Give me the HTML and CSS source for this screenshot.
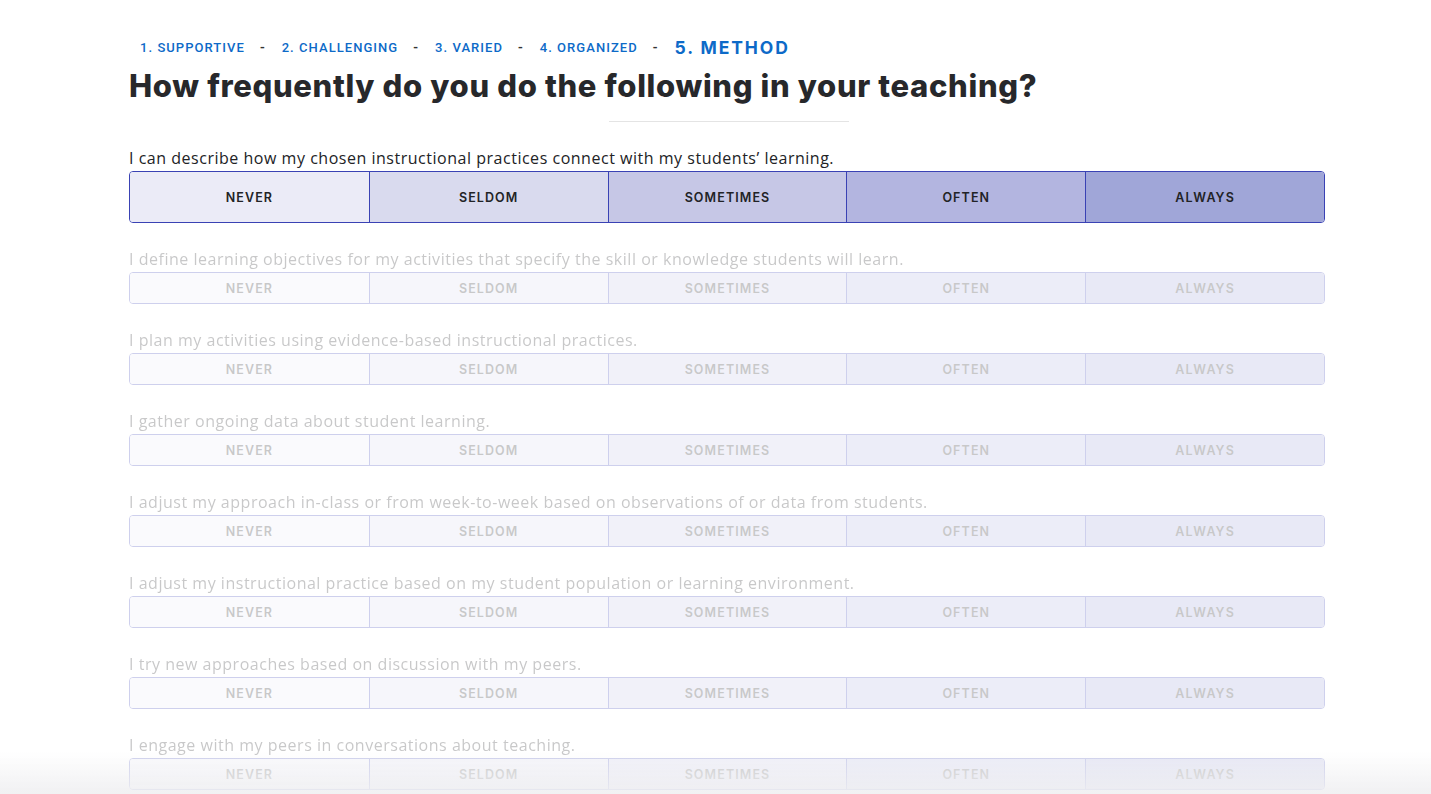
FILE: index.html
```html
<!DOCTYPE html>
<html lang="en">
<head>
<meta charset="utf-8">
<title>Method</title>
<link rel="stylesheet" href="styles.css">
</head>
<body>
<main class="page">
  <nav class="steps">
    <span class="step">1. SUPPORTIVE</span><span class="sep">-</span>
    <span class="step">2. CHALLENGING</span><span class="sep">-</span>
    <span class="step">3. VARIED</span><span class="sep">-</span>
    <span class="step">4. ORGANIZED</span><span class="sep">-</span>
    <span class="step current">5. METHOD</span>
  </nav>
  <h1 class="title">How frequently do you do the following in your teaching?</h1>
  <div class="divider"></div>

  <section class="question active">
    <p class="q-text">I can describe how my chosen instructional practices connect with my students’ learning.</p>
    <div class="scale">
      <div class="opt o1">NEVER</div><div class="opt o2">SELDOM</div><div class="opt o3">SOMETIMES</div><div class="opt o4">OFTEN</div><div class="opt o5">ALWAYS</div>
    </div>
  </section>

  <section class="question">
    <p class="q-text">I define learning objectives for my activities that specify the skill or knowledge students will learn.</p>
    <div class="scale">
      <div class="opt o1">NEVER</div><div class="opt o2">SELDOM</div><div class="opt o3">SOMETIMES</div><div class="opt o4">OFTEN</div><div class="opt o5">ALWAYS</div>
    </div>
  </section>

  <section class="question">
    <p class="q-text">I plan my activities using evidence-based instructional practices.</p>
    <div class="scale">
      <div class="opt o1">NEVER</div><div class="opt o2">SELDOM</div><div class="opt o3">SOMETIMES</div><div class="opt o4">OFTEN</div><div class="opt o5">ALWAYS</div>
    </div>
  </section>

  <section class="question">
    <p class="q-text">I gather ongoing data about student learning.</p>
    <div class="scale">
      <div class="opt o1">NEVER</div><div class="opt o2">SELDOM</div><div class="opt o3">SOMETIMES</div><div class="opt o4">OFTEN</div><div class="opt o5">ALWAYS</div>
    </div>
  </section>

  <section class="question">
    <p class="q-text">I adjust my approach in-class or from week-to-week based on observations of or data from students.</p>
    <div class="scale">
      <div class="opt o1">NEVER</div><div class="opt o2">SELDOM</div><div class="opt o3">SOMETIMES</div><div class="opt o4">OFTEN</div><div class="opt o5">ALWAYS</div>
    </div>
  </section>

  <section class="question">
    <p class="q-text">I adjust my instructional practice based on my student population or learning environment.</p>
    <div class="scale">
      <div class="opt o1">NEVER</div><div class="opt o2">SELDOM</div><div class="opt o3">SOMETIMES</div><div class="opt o4">OFTEN</div><div class="opt o5">ALWAYS</div>
    </div>
  </section>

  <section class="question">
    <p class="q-text">I try new approaches based on discussion with my peers.</p>
    <div class="scale">
      <div class="opt o1">NEVER</div><div class="opt o2">SELDOM</div><div class="opt o3">SOMETIMES</div><div class="opt o4">OFTEN</div><div class="opt o5">ALWAYS</div>
    </div>
  </section>

  <section class="question">
    <p class="q-text">I engage with my peers in conversations about teaching.</p>
    <div class="scale">
      <div class="opt o1">NEVER</div><div class="opt o2">SELDOM</div><div class="opt o3">SOMETIMES</div><div class="opt o4">OFTEN</div><div class="opt o5">ALWAYS</div>
    </div>
  </section>
</main>
<div class="bottom-fade"></div>
</body>
</html>
```

FILE: styles.css
```css
html, body {
  margin: 0;
  padding: 0;
  background: #ffffff;
  overflow: hidden;
}

body {
  font-family: "Open Sans", "Liberation Sans", sans-serif;
  color: #222326;
}

.page {
  width: 1196px;
  margin-left: 129px;
  padding-top: 37px;
}

.steps {
  display: flex;
  align-items: center;
  padding-left: 11px;
  height: 20px;
  font-family: "Roboto", "Liberation Sans", sans-serif;
  color: #0d6ac8;
}

.step {
  font-size: 13px;
  font-weight: 500;
  letter-spacing: 1.05px;
}

.step.current {
  font-family: "Inter", "Liberation Sans", sans-serif;
  font-size: 17.5px;
  font-weight: 700;
  letter-spacing: 1.9px;
}

.sep {
  font-size: 14px;
  font-weight: 500;
  margin: 0 17px 0 15px;
  color: #333;
}

.title {
  margin: 10px 0 0 0;
  font-family: "Inter", "Liberation Sans", sans-serif;
  font-weight: 800;
  font-size: 31px;
  line-height: 38px;
  letter-spacing: 0.65px;
  color: #27282b;
}

.divider {
  width: 240px;
  height: 1px;
  background: #e4e4e4;
  margin: 16px auto 0 480px;
}

.question {
  margin-top: 26px;
  opacity: 0.25;
}

.question.active {
  opacity: 1;
}

.q-text {
  margin: 0 0 3px 0;
  font-size: 16px;
  line-height: 20px;
  letter-spacing: 0.52px;
  color: #222326;
}

.scale {
  display: grid;
  grid-template-columns: repeat(5, 1fr);
  height: 32px;
  border: 1px solid #3a42b4;
  border-radius: 4px;
  overflow: hidden;
  box-sizing: border-box;
}

.active .scale {
  height: 52px;
}

.opt {
  display: flex;
  align-items: center;
  justify-content: center;
  font-family: "Inter", "Liberation Sans", sans-serif;
  font-size: 12.5px;
  font-weight: 600;
  letter-spacing: 1.1px;
  color: #222326;
  border-left: 1px solid #3a42b4;
}

.opt.o1 { border-left: none; background: #ebebf7; }
.opt.o2 { background: #d9daee; }
.opt.o3 { background: #c6c7e6; }
.opt.o4 { background: #b3b5e0; }
.opt.o5 { background: #a0a6d8; }

.bottom-fade {
  position: fixed;
  left: 0;
  right: 0;
  bottom: 0;
  height: 42px;
  background: linear-gradient(to bottom, rgba(240, 240, 242, 0), rgba(238, 238, 240, 0.85));
  pointer-events: none;
}
```
